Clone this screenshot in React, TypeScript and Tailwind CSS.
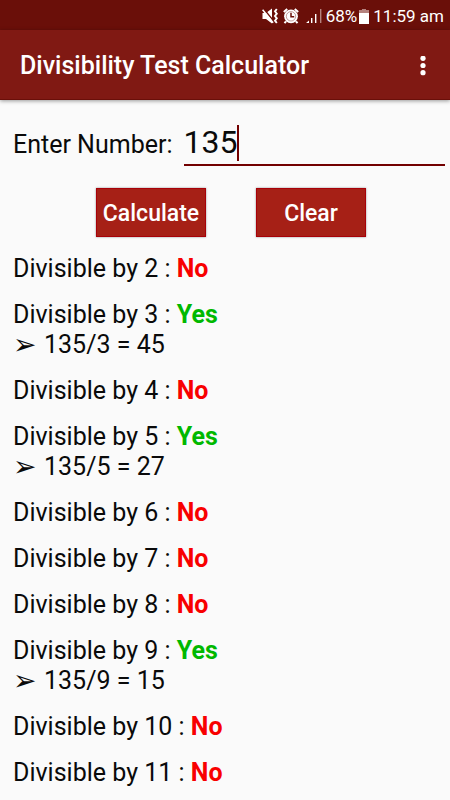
import { useState } from "react";

const DIVISORS = [2, 3, 4, 5, 6, 7, 8, 9, 10, 11];

const StatusBar = () => (
  <div className="flex h-[30px] items-center justify-end bg-[#6a0f09] pt-[2px] pr-[6px] text-[17px] leading-none text-white">
    {/* Vibrate / muted */}
    <svg className="mr-[5px] h-4 w-4" viewBox="0 0 16 16" fill="none">
      <path d="M0.5 5h3.5l6-4.5v15L4 11H0.5z" fill="#fff" />
      <path d="M1.6 0.8l10.5 13" stroke="#6a0f09" strokeWidth="1.6" />
      <path d="M0.6 1.8l10.5 13" stroke="#fff" strokeWidth="1.6" />
      <path d="M14.8 1l-1.8 2.3 1.8 2.4L13 8l1.8 2.3-1.8 2.4 1.8 2.3" stroke="#fff" strokeWidth="1.9" />
    </svg>
    {/* Alarm */}
    <svg className="mr-[7px] h-4 w-4" viewBox="0 0 16 16" fill="none">
      <circle cx="8" cy="8.3" r="6.9" fill="#fff" />
      <path d="M0.8 4l3.4-3M15.2 4l-3.4-3M3 13.3l-1.5 1.9M13 13.3l1.5 1.9" stroke="#fff" strokeWidth="2" />
      <circle cx="8" cy="8.3" r="4.7" stroke="#6a0f09" strokeWidth="0.4" />
      <path d="M8 4.8v3.9h3.2" stroke="#6a0f09" strokeWidth="1.5" />
    </svg>
    {/* Signal */}
    <svg className="mr-1 h-4 w-4" viewBox="0 0 16 16">
      <path d="M0 15l3-2.5V15zM5 10h1.4v5H5zM9 6h1.4v9H9z" fill="#fff" />
      <path d="M14 1h1.4v14H14z" fill="#b5827e" />
    </svg>
    <span>68%</span>
    {/* Battery */}
    <svg className="ml-[2px] mr-1 h-4 w-[10px]" viewBox="0 0 10 16">
      <path d="M3 1h4v1h3v4H0V2h3z" fill="#b5827e" />
      <path d="M0 5h10v11H0z" fill="#fff" />
    </svg>
    <span>11:59 am</span>
  </div>
);

const Header = () => (
  <header className="relative flex h-[70px] items-center justify-between border-b border-[#6a0f09] bg-[#801913] pl-5 pr-[15px] pt-[2px] text-white shadow-[0_1px_4px_rgba(0,0,0,0.4)]">
    <h1 className="text-[25px] font-medium leading-8">Divisibility Test Calculator</h1>
    <button type="button" aria-label="More options" className="flex h-8 w-6 items-center justify-center">
      <svg className="h-5 w-[6px]" viewBox="0 0 6 20" fill="currentColor">
        <circle cx="3" cy="2.3" r="2.6" />
        <circle cx="3" cy="9.5" r="2.6" />
        <circle cx="3" cy="16.7" r="2.6" />
      </svg>
    </button>
  </header>
);

const Result = ({ value, divisor }: { value: number; divisor: number }) => {
  const divisible = value % divisor === 0;

  return (
    <li>
      <p>
        Divisible by {divisor} :{" "}
        <b className={divisible ? "font-bold text-[#00b800]" : "font-bold text-[#f80000]"}>
          {divisible ? "Yes" : "No"}
        </b>
      </p>
      {divisible && (
        <p className="flex">
          <span className="w-[31px] font-['DejaVu_Sans',sans-serif] text-[28px]">➢</span>
          {value}/{divisor} = {value / divisor}
        </p>
      )}
    </li>
  );
};

export default function App() {
  const [input, setInput] = useState("135");
  const [tested, setTested] = useState<number | null>(135);

  const handleSubmit = (e: React.FormEvent) => {
    e.preventDefault();
    setTested(input ? Number(input) : null);
  };

  const handleClear = () => {
    setInput("");
    setTested(null);
  };

  return (
    <div className="min-h-screen bg-[#fafafa] font-['Roboto',sans-serif] text-[25px] leading-[30px] text-[#0a0a0a]">
      <StatusBar />
      <Header />

      <main className="pt-6">
        <form onSubmit={handleSubmit}>
          <div className="flex items-center pl-[13px] pr-[5px]">
            <label htmlFor="number" className="mr-[11px]">
              Enter Number:
            </label>
            <div className="relative min-w-0 flex-1 border-b-2 border-[#720000]">
              <input
                id="number"
                type="text"
                inputMode="numeric"
                value={input}
                onChange={(e) => setInput(e.target.value.replace(/\D/g, ""))}
                className="block h-10 w-full bg-transparent pb-1 text-[32px] leading-9 caret-transparent outline-none"
              />
              {/* Thick caret after the typed digits */}
              <span
                aria-hidden="true"
                className="pointer-events-none absolute left-0 top-px h-9 border-r-2 border-[#720000] text-[32px] leading-9 text-transparent"
              >
                {input}
              </span>
            </div>
          </div>

          <div className="mt-[22px] flex justify-center gap-[50px] pl-3 text-[23px] font-medium text-white">
            <button
              type="submit"
              className="h-[49px] w-[110px] border border-[#a80008] bg-[#a62016] pt-[2px] shadow-[0_0_2px_rgba(0,0,0,0.4)]"
            >
              Calculate
            </button>
            <button
              type="button"
              onClick={handleClear}
              className="h-[49px] w-[110px] border border-[#a80008] bg-[#a62016] pt-[2px] shadow-[0_0_2px_rgba(0,0,0,0.4)]"
            >
              Clear
            </button>
          </div>
        </form>

        {tested !== null && (
          <ul className="mt-[17px] space-y-4 px-[13px]">
            {DIVISORS.map((divisor) => (
              <Result key={divisor} value={tested} divisor={divisor} />
            ))}
          </ul>
        )}
      </main>
    </div>
  );
}
